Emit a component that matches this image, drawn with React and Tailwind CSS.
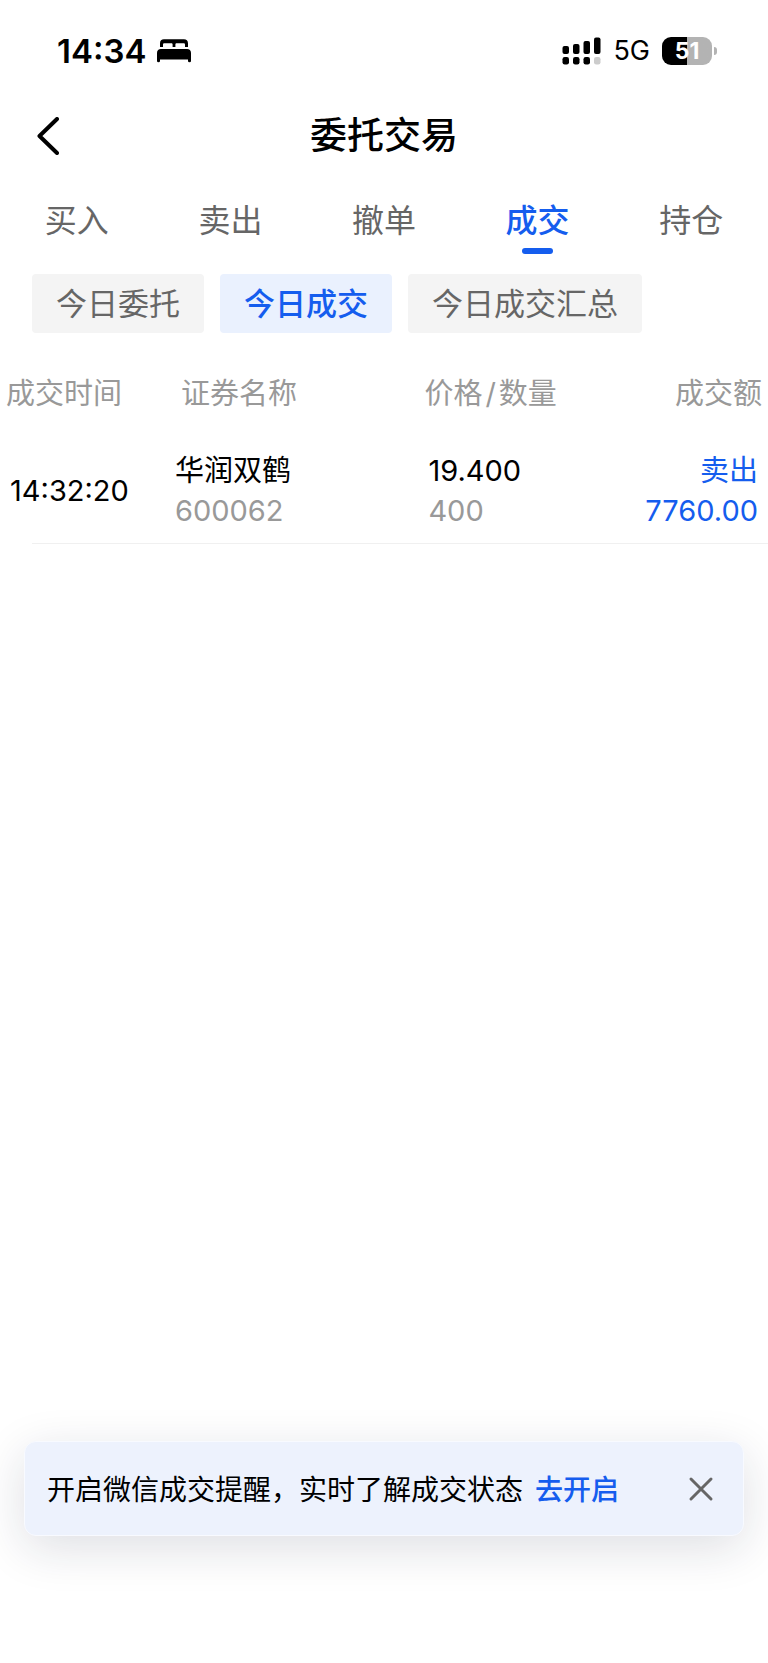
import React, { useState } from "react";

const TABS = ["买入", "卖出", "撤单", "成交", "持仓"];
const FILTERS = ["今日委托", "今日成交", "今日成交汇总"];
const TRADES = [
  {
    time: "14:32:20",
    name: "华润双鹤",
    code: "600062",
    price: "19.400",
    quantity: "400",
    side: "卖出",
    amount: "7760.00",
  },
];

function BedIcon() {
  return (
    <svg width="34" height="24" viewBox="0 0 34 24" fill="currentColor" aria-hidden="true">
      <path d="M3 8V4.500C3 1.500 4.500 0.300 7 0.300H27C29.300 0.300 31 1.500 31 4.500V8H28V5.800C28 4.600 27.500 4.200 26.400 4.200H19.800C18.800 4.200 18.400 4.600 18.400 5.600V8H15.600V5.600C15.600 4.600 15.200 4.200 14.200 4.200H7.600C6.500 4.200 6 4.600 6 5.800V8Z" />
      <path d="M0 14C0 11.500 1.500 10 4 10H30C32.500 10 34 11.500 34 14V22Q34 23.300 32.500 23.300Q31 23.300 31 22V20.500H3V22Q3 23.300 1.500 23.300Q0 23.300 0 22Z" />
    </svg>
  );
}

function SignalIcon() {
  return (
    <svg width="39" height="28" viewBox="0 0 39 28" fill="currentColor" aria-hidden="true">
      <rect x="0.500" y="9" width="6.500" height="8" rx="2" />
      <rect x="11" y="7" width="6.500" height="10" rx="2" />
      <rect x="21.500" y="4" width="6.500" height="13" rx="2" />
      <rect x="32" y="0.500" width="6.500" height="16.500" rx="2" />
      <rect x="0.500" y="20" width="6.500" height="7.500" rx="2.200" />
      <rect x="11" y="20" width="6.500" height="7.500" rx="2.200" />
      <rect x="21.500" y="20" width="6.500" height="7.500" rx="2.200" />
      <rect x="32" y="20" width="6.500" height="7.500" rx="2.200" fill="#cccccc" />
    </svg>
  );
}

function StatusBar() {
  return (
    <div className="flex h-[102px] items-center justify-between pl-[57px] pr-[51px] text-black">
      <div className="flex items-center gap-[11px]">
        <span className="text-[33px] leading-10 font-semibold">14:34</span>
        <BedIcon />
      </div>
      <div className="flex items-center gap-3">
        <SignalIcon />
        <span className="text-[27px] leading-8">5G</span>
        <div className="flex items-center gap-[2px]">
          <div className="flex h-7 w-[50px] items-center justify-center rounded-[9px] bg-linear-to-r from-black from-50% to-[#b3b3b3] to-50% text-[23px] leading-7 font-bold text-white">
            51
          </div>
          <div className="h-2 w-[3px] rounded-r-full bg-[#b3b3b3]" />
        </div>
      </div>
    </div>
  );
}

export default function App() {
  const [tab, setTab] = useState("成交");
  const [filter, setFilter] = useState("今日成交");
  const [noticeOpen, setNoticeOpen] = useState(true);

  return (
    <div
      lang="zh-CN"
      className="flex min-h-screen flex-col bg-white font-[Inter,'Noto_Sans_CJK_SC',sans-serif] text-black"
    >
      <StatusBar />

      <header className="grid h-[68px] grid-cols-[1fr_auto_1fr] items-center">
        <button type="button" aria-label="返回" className="ml-8 flex h-12 w-8 items-center justify-center">
          <svg width="22" height="38" viewBox="0 0 22 38" fill="none" stroke="currentColor" strokeWidth="4" strokeLinecap="round" strokeLinejoin="round" aria-hidden="true">
            <path d="M20 2L2.500 19L20 36" />
          </svg>
        </button>
        <h1 className="text-[37px] leading-[48px] font-medium">委托交易</h1>
      </header>

      <nav className="grid h-[104px] grid-cols-5 pt-[27px]">
        {TABS.map((name) => (
          <button
            key={name}
            type="button"
            aria-pressed={tab === name}
            onClick={() => setTab(name)}
            className={
              tab === name
                ? "flex flex-col items-center gap-[3px] text-[32px] leading-[48px] font-medium text-[#155dee]"
                : "flex flex-col items-center gap-[3px] text-[32px] leading-[48px] text-[#666666]"
            }
          >
            {name}
            {tab === name && <span className="h-[6px] w-[31px] rounded-full bg-[#155dee]" />}
          </button>
        ))}
      </nav>

      <div className="flex gap-4 px-8">
        {FILTERS.map((name) => (
          <button
            key={name}
            type="button"
            aria-pressed={filter === name}
            onClick={() => setFilter(name)}
            className={
              filter === name
                ? "h-[59px] rounded bg-[#eaf1fe] px-6 text-[31px] leading-[59px] font-medium text-[#155dee]"
                : "h-[59px] rounded bg-[#f4f4f4] px-6 text-[31px] leading-[59px] text-[#666666]"
            }
          >
            {name}
          </button>
        ))}
      </div>

      <table className="mt-4 w-full table-fixed text-left text-[29px] leading-10">
        <thead className="text-[#999999]">
          <tr className="h-[86px]">
            <th className="w-[22%] pt-1 pl-[6px] font-normal whitespace-nowrap">成交时间</th>
            <th className="w-[33%] pt-1 pl-3 font-normal whitespace-nowrap">证券名称</th>
            <th className="w-[23%] pt-1 pl-[2px] font-normal whitespace-nowrap">
              价格<span className="mx-[3px]">/</span>数量
            </th>
            <th className="pt-1 pr-[6px] text-right font-normal whitespace-nowrap">成交额</th>
          </tr>
        </thead>
        <tbody>
          {TRADES.map((t) => (
            <tr key={t.time + t.code} className="h-[108px]">
              <td className="pt-1 pl-[10px]">{t.time}</td>
              <td className="pt-1 pl-[6px]">
                <div>{t.name}</div>
                <div className="text-[#999999]">{t.code}</div>
              </td>
              <td className="pt-1 pl-[6px]">
                <div>{t.price}</div>
                <div className="text-[#999999]">{t.quantity}</div>
              </td>
              <td className="pt-1 pr-[10px] text-right text-[#155dee]">
                <div>{t.side}</div>
                <div>{t.amount}</div>
              </td>
            </tr>
          ))}
        </tbody>
      </table>
      <div className="ml-8 h-px bg-[#f0f0f0]" />

      {noticeOpen && (
        <aside className="mx-6 mt-auto mb-[127px] flex h-[95px] items-center rounded-xl border border-[#f8faff] bg-[#edf2fd] pr-7 pl-[22px] text-[28px] leading-10 shadow-[0_12px_48px_rgba(20,30,60,0.14)]">
          <p className="pt-[2px]">开启微信成交提醒，实时了解成交状态</p>
          <a href="#enable" className="ml-3 pt-[2px] font-medium text-[#155dee]">
            去开启
          </a>
          <button type="button" aria-label="关闭" onClick={() => setNoticeOpen(false)} className="ml-auto text-[#666666]">
            <svg width="28" height="28" viewBox="0 0 28 28" fill="none" stroke="currentColor" strokeWidth="3" strokeLinecap="round" aria-hidden="true">
              <path d="M4 4L24 24M24 4L4 24" />
            </svg>
          </button>
        </aside>
      )}
    </div>
  );
}
